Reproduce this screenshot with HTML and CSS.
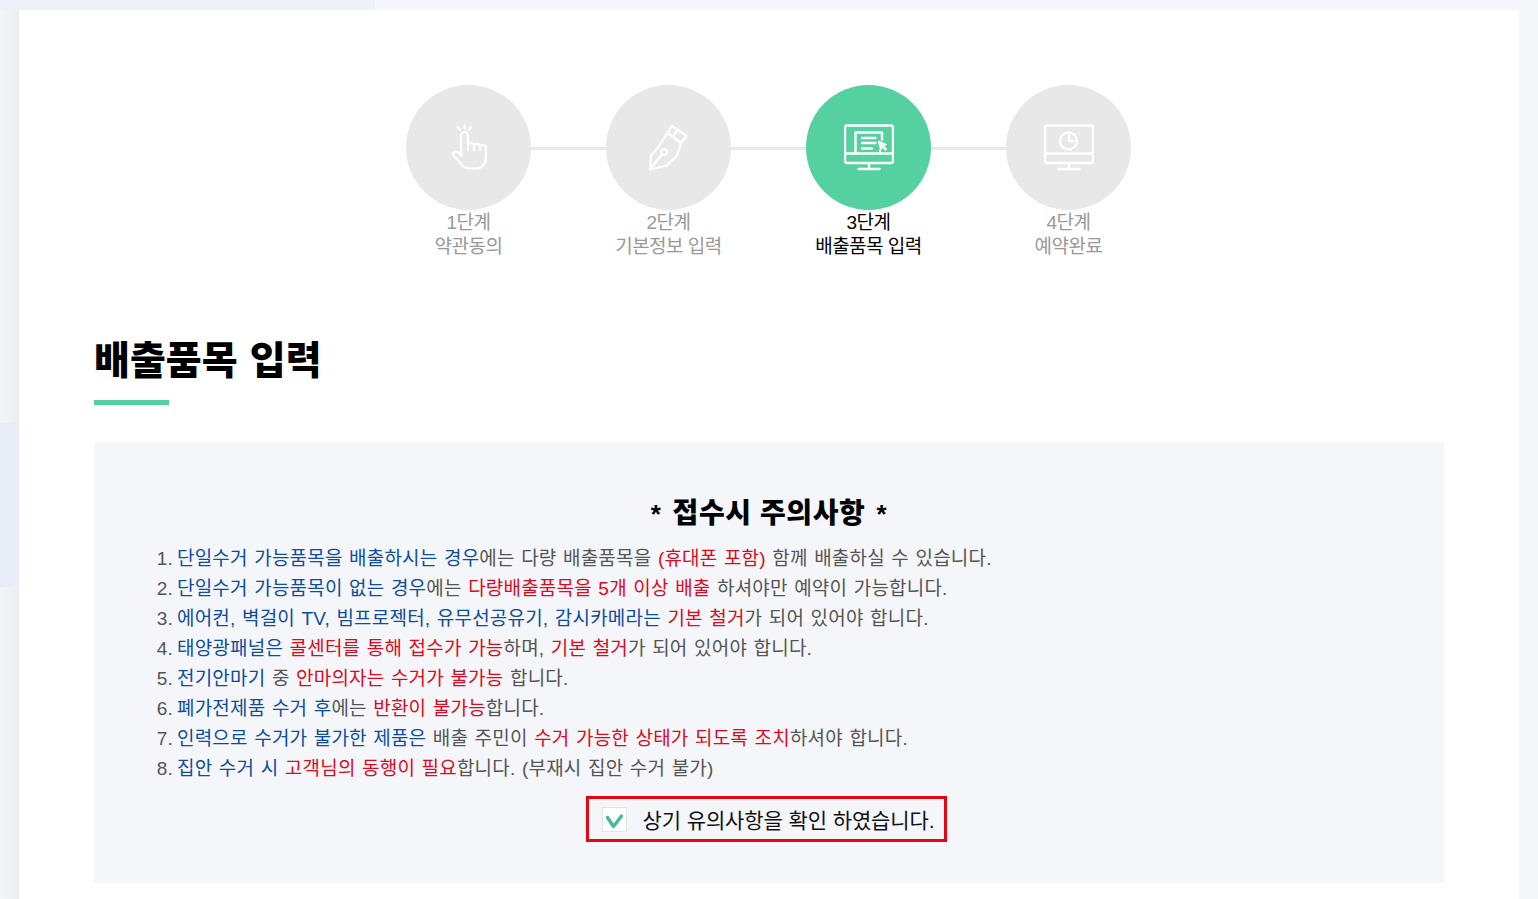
FILE: index.html
```html
<!DOCTYPE html>
<html lang="ko">
<head>
<meta charset="utf-8">
<title>배출품목 입력</title>
<link rel="stylesheet" href="styles.css">
</head>
<body>
<div class="deco deco-top"></div>
<div class="deco deco-strip"></div>
<div class="deco deco-left"></div>
<main class="card">
  <ol class="steps">
    <li class="step">
      <div class="circle">
        <svg class="icon" viewBox="0 0 50 50" fill="none" stroke="#fff" stroke-width="2.200" stroke-linecap="round" stroke-linejoin="round">
          <path d="M17 33V12.500a3.500 3.500 0 0 1 7 0V27M24 23a3 3 0 0 1 6 0v4M30 24a3 3 0 0 1 6 0v3M36 25a3 3 0 0 1 6 0v9c0 7-4 11.500-10 11.500h-6c-5 0-8-2.500-10-6l-6.500-7c-1.500-2 1-4.500 3.500-3.500l5.500 3.500"/>
          <path d="M20.500 2.500v3.500M14 4l2 3M27 4l-2 3"/>
        </svg>
      </div>
      <p class="label">1단계<br>약관동의</p>
    </li>
    <li class="step">
      <div class="circle">
        <svg class="icon" viewBox="0 0 50 50" fill="none" stroke="#fff" stroke-width="2.200" stroke-linecap="round" stroke-linejoin="round">
          <path d="M28 3l14.500 10-5.500 7-13.500-10zM33.500 7l-5 7"/>
          <path d="M23.500 10l13.500 10c-1 4-3 10-5 14-3 3-8 6-9 8.500L6 46.500l1.200-14.500c3-3 7-7 9-11z"/>
          <circle cx="20" cy="29" r="3"/>
          <path d="M18 31.500L6 46.500"/>
        </svg>
      </div>
      <p class="label">2단계<br>기본정보 입력</p>
    </li>
    <li class="step step-active">
      <div class="circle">
        <svg class="icon" viewBox="0 0 50 50" fill="none" stroke="#fff" stroke-width="2.400" stroke-linecap="round" stroke-linejoin="round">
          <rect x="1" y="2.500" width="48" height="37.500" rx="2"/>
          <path d="M1 30.500h48M25 40v6M14.500 46h21"/>
          <path d="M38 16.500V9.500H11.500v21M18 15h13.500M18 20h13.500M18 25.500h10"/>
          <path d="M34.500 18l8 3.500-2.800 1.300 3 3.200-1.500 1.500-3-3.200-1.300 2.700z" fill="#fff" stroke-width="1"/>
          <path d="M36 27v3.500" stroke-width="1.600"/>
        </svg>
      </div>
      <p class="label">3단계<br>배출품목 입력</p>
    </li>
    <li class="step">
      <div class="circle">
        <svg class="icon" viewBox="0 0 50 50" fill="none" stroke="#fff" stroke-width="2.400" stroke-linecap="round" stroke-linejoin="round">
          <rect x="1" y="2.500" width="48" height="37.500" rx="2"/>
          <path d="M1 30.500h48M25 40v6M14.500 46h21"/>
          <circle cx="24.500" cy="18" r="8.500"/>
          <path d="M25 12.500v5.500h5"/>
        </svg>
      </div>
      <p class="label">4단계<br>예약완료</p>
    </li>
  </ol>

  <h1 class="title">배출품목 입력</h1>
  <div class="title-bar"></div>

  <section class="notice">
    <h2 class="notice-title"><span class="star">*</span>접수시 주의사항<span class="star">*</span></h2>
    <ol class="rules">
      <li><span class="blue">단일수거 가능품목을 배출하시는 경우</span>에는 다량 배출품목을 <span class="red">(휴대폰 포함)</span> 함께 배출하실 수 있습니다.</li>
      <li><span class="blue">단일수거 가능품목이 없는 경우</span>에는 <span class="red">다량배출품목을 5개 이상 배출</span> 하셔야만 예약이 가능합니다.</li>
      <li><span class="blue">에어컨, 벽걸이 TV, 빔프로젝터, 유무선공유기, 감시카메라는</span> <span class="red">기본 철거</span>가 되어 있어야 합니다.</li>
      <li><span class="blue">태양광패널은</span> <span class="red">콜센터를 통해 접수가 가능</span>하며, <span class="red">기본 철거</span>가 되어 있어야 합니다.</li>
      <li><span class="blue">전기안마기</span> 중 <span class="red">안마의자는 수거가 불가능</span> 합니다.</li>
      <li><span class="blue">폐가전제품 수거 후</span>에는 <span class="red">반환이 불가능</span>합니다.</li>
      <li><span class="blue">인력으로 수거가 불가한 제품은</span> 배출 주민이 <span class="red">수거 가능한 상태가 되도록 조치</span>하셔야 합니다.</li>
      <li><span class="blue">집안 수거 시</span> <span class="red">고객님의 동행이 필요</span>합니다. (부재시 집안 수거 불가)</li>
    </ol>
    <div class="confirm-wrap">
      <label class="confirm">
        <span class="check">
          <svg viewBox="0 0 25 25" class="check-mark" fill="none" stroke="#4ab896" stroke-width="3.400" stroke-linecap="round" stroke-linejoin="round"><path d="M5.500 10.500l6 9 8-10.500"/></svg>
        </span>
        <span class="confirm-text">상기 유의사항을 확인 하였습니다.</span>
      </label>
    </div>
  </section>
</main>
</body>
</html>
```

FILE: styles.css
```css
* { box-sizing: border-box; }
html, body { margin: 0; padding: 0; height: 899px; overflow: hidden; }
body {
  background: #f6f7fa;
  font-family: "Liberation Sans", "Noto Sans CJK KR", sans-serif;
  color: #555;
  position: relative;
  padding: 10px 19px 0;
}
.deco { position: absolute; }
.deco-top { left: 0; top: 0; width: 375px; height: 10px; background: #eef1f9; }
.deco-strip { left: 0; top: 10px; width: 19px; height: 889px; background: linear-gradient(90deg, #f4f5f7, #ecedef); }
.deco-left { left: 0; top: 423px; width: 19px; height: 164px; background: #e7ecf6; }
.card {
  position: relative;
  background: #fff;
  width: 1500px;
  height: 889px;
  padding: 75px 75px 0;
}
.steps {
  list-style: none;
  margin: 0;
  padding: 0 1px 0 0;
  display: flex;
  justify-content: center;
}
.step {
  width: 200px;
  display: flex;
  flex-direction: column;
  align-items: center;
  position: relative;
}
.step:not(:last-child)::after {
  content: "";
  position: absolute;
  left: 100px;
  top: 62px;
  width: 200px;
  height: 3px;
  background: #e8e8e8;
}
.circle {
  width: 125px;
  height: 125px;
  border-radius: 50%;
  background: #e8e8e8;
  display: flex;
  align-items: center;
  justify-content: center;
  position: relative;
  z-index: 1;
}
.step-active .circle { background: #55d0a0; }
.icon { width: 50px; height: 50px; }
.label {
  margin: 1px 0 0;
  text-align: center;
  font-size: 19px;
  line-height: 24px;
  letter-spacing: -0.5px;
  color: #999;
}
.step-active .label { color: #000; }
.title {
  margin: 77px 0 0;
  font-size: 39px;
  line-height: 50px;
  font-weight: 900;
  color: #000;
  word-spacing: 1.5px;
}
.title-bar {
  width: 75px;
  height: 5px;
  background: #55d0a0;
  margin-top: 14px;
}
.notice {
  margin-top: 37px;
  background: #f4f6f9;
  height: 441px;
  padding: 52px 62px 0;
}
.notice-title {
  margin: 0;
  text-align: center;
  font-size: 28px;
  line-height: 40px;
  font-weight: 900;
  color: #000;
  letter-spacing: 0.6px;
}
.star { margin: 0 11px; font-size: 26px; font-weight: 700; }
.rules {
  margin: 10px 0 0;
  padding: 0 0 0 21px;
  font-size: 19px;
  line-height: 30px;
  letter-spacing: 0.2px;
  word-spacing: 1px;
  color: #555;
}
.rules li::marker { content: counter(list-item) ".\2009"; }
.blue { color: #0f4c9e; }
.red { color: #dc0a1e; }
.confirm-wrap { display: flex; justify-content: center; margin-top: 12px; padding-right: 6px; }
.confirm {
  display: flex;
  align-items: center;
  width: 361px;
  height: 46px;
  border: 3px solid #e30613;
  padding-left: 13px;
}
.check {
  width: 25px;
  height: 25px;
  background: #fff;
  border: 1px solid #e4e4e4;
  display: flex;
  align-items: center;
  justify-content: center;
  flex: none;
}
.check-mark { width: 25px; height: 25px; flex: none; }
.confirm-text {
  margin-left: 16px;
  font-size: 21px;
  color: #111;
  letter-spacing: -0.1px;
  white-space: nowrap;
}
```
